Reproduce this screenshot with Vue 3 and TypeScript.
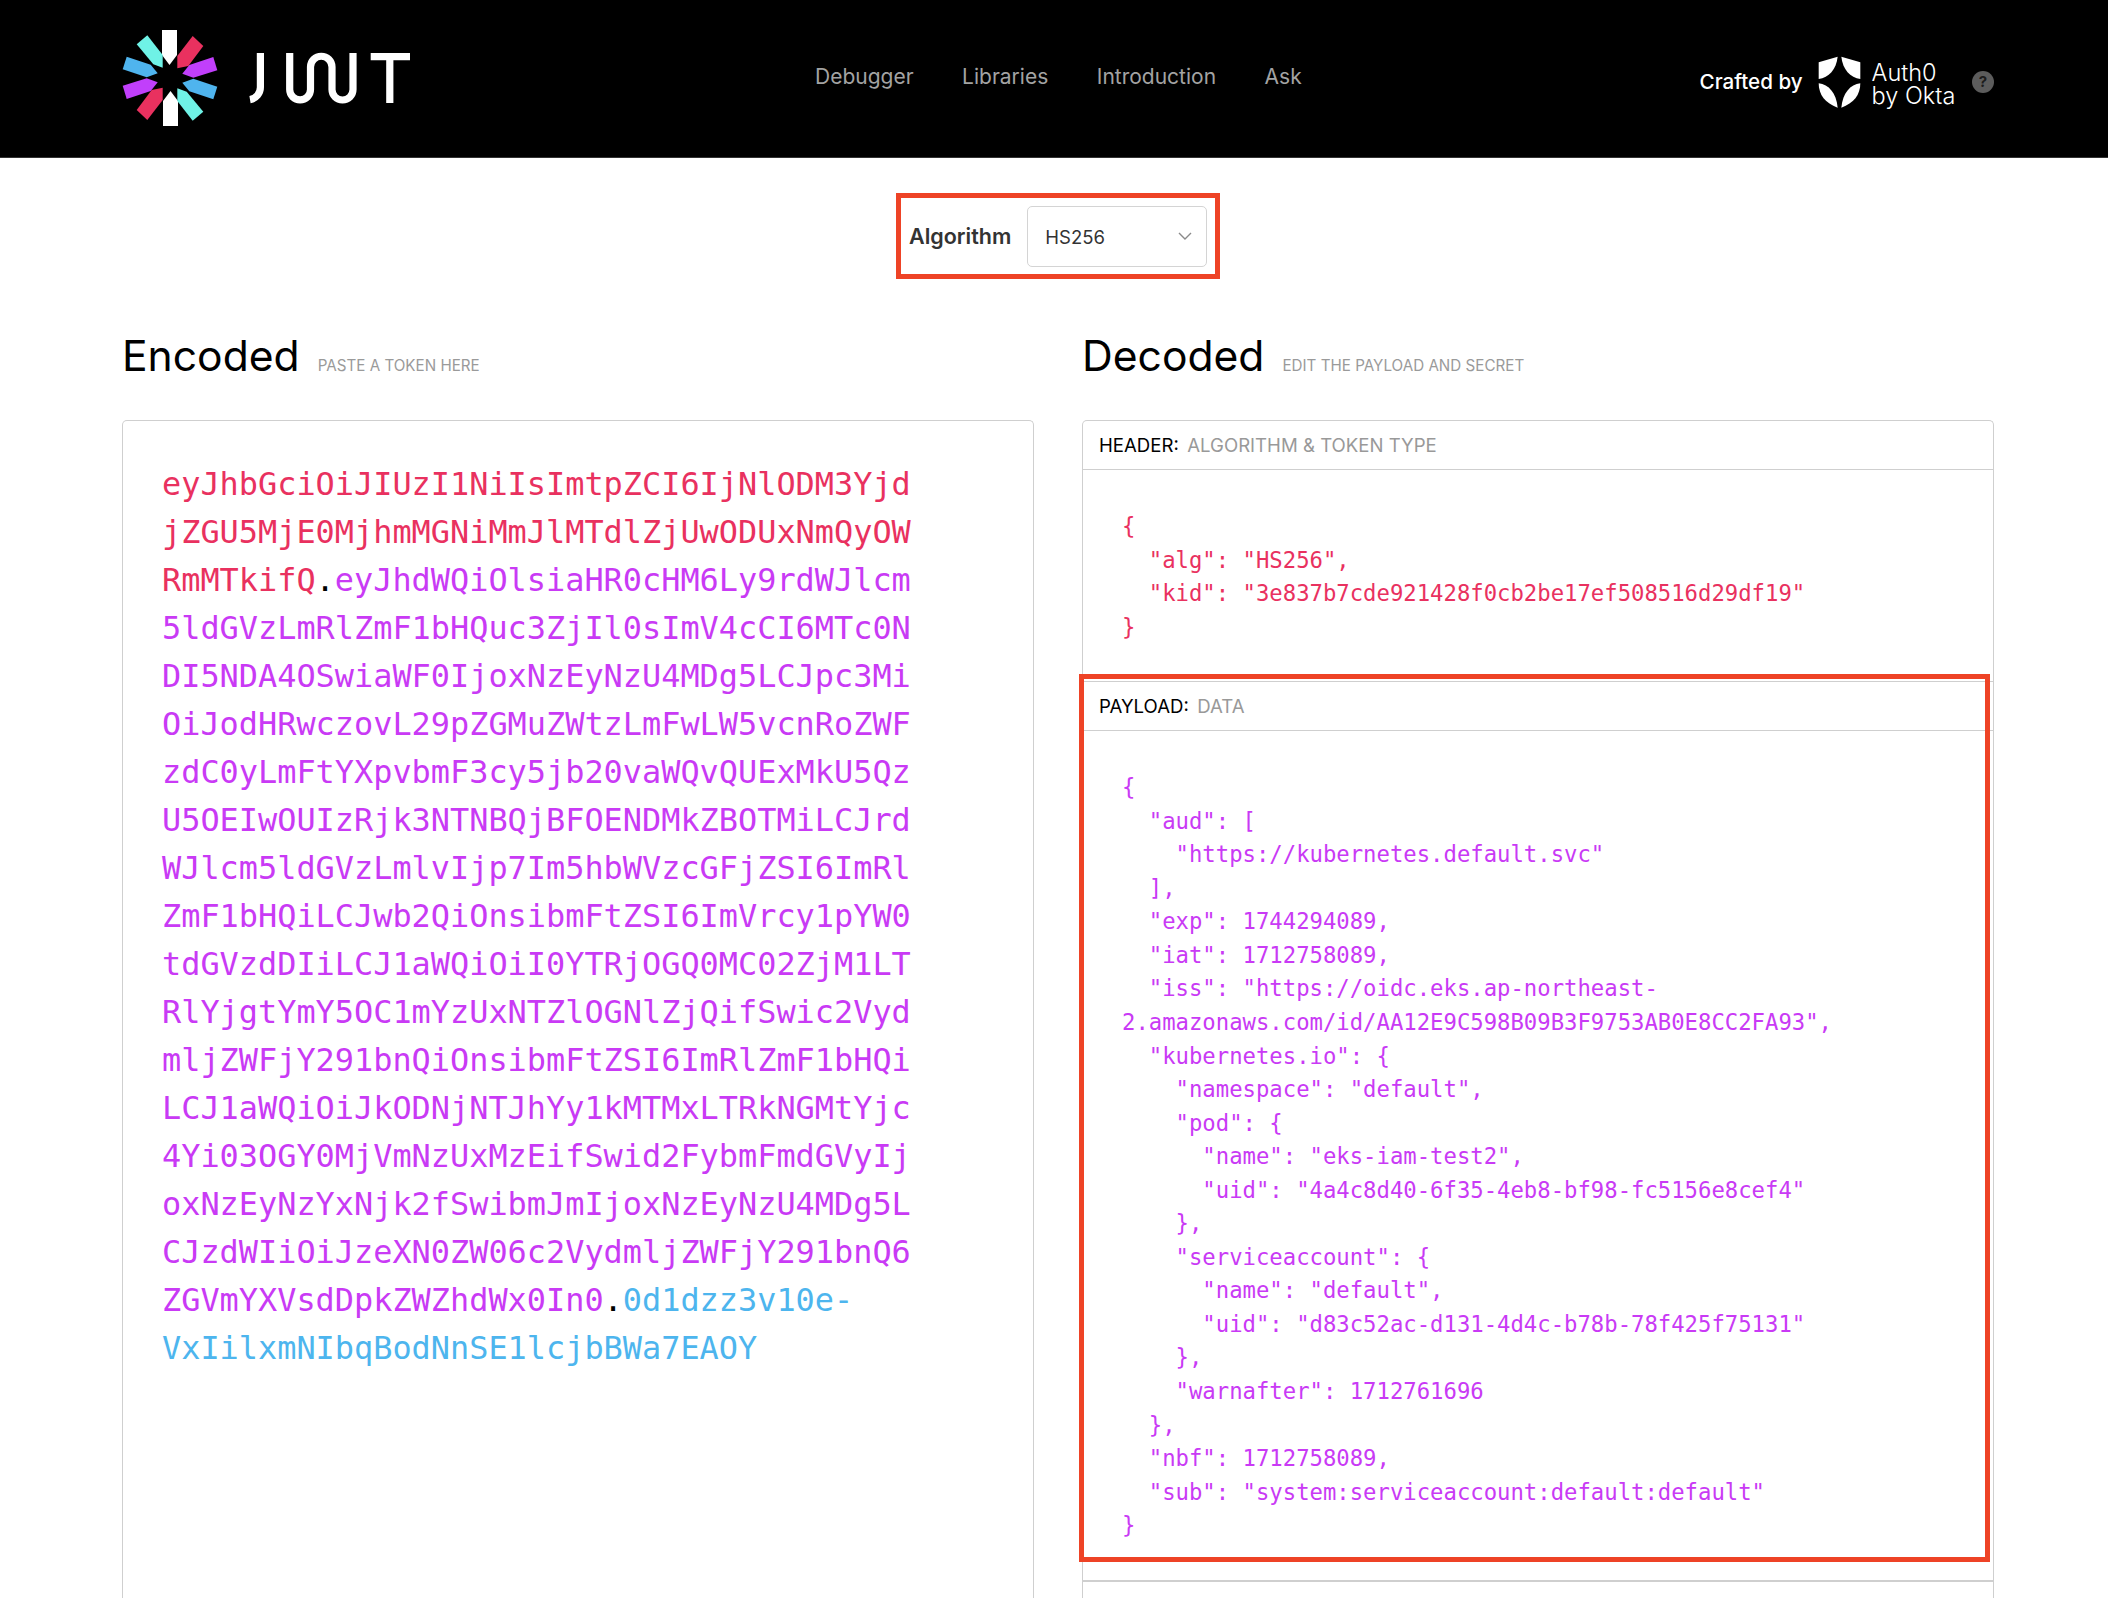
<script setup lang="ts">
const navItems: string[] = ['Debugger', 'Libraries', 'Introduction', 'Ask']

const tokenHeader = 'eyJhbGciOiJIUzI1NiIsImtpZCI6IjNlODM3YjdjZGU5MjE0MjhmMGNiMmJlMTdlZjUwODUxNmQyOWRmMTkifQ'
const tokenPayload = 'eyJhdWQiOlsiaHR0cHM6Ly9rdWJlcm5ldGVzLmRlZmF1bHQuc3ZjIl0sImV4cCI6MTc0NDI5NDA4OSwiaWF0IjoxNzEyNzU4MDg5LCJpc3MiOiJodHRwczovL29pZGMuZWtzLmFwLW5vcnRoZWFzdC0yLmFtYXpvbmF3cy5jb20vaWQvQUExMkU5QzU5OEIwOUIzRjk3NTNBQjBFOENDMkZBOTMiLCJrdWJlcm5ldGVzLmlvIjp7Im5hbWVzcGFjZSI6ImRlZmF1bHQiLCJwb2QiOnsibmFtZSI6ImVrcy1pYW0tdGVzdDIiLCJ1aWQiOiI0YTRjOGQ0MC02ZjM1LTRlYjgtYmY5OC1mYzUxNTZlOGNlZjQifSwic2VydmljZWFjY291bnQiOnsibmFtZSI6ImRlZmF1bHQiLCJ1aWQiOiJkODNjNTJhYy1kMTMxLTRkNGMtYjc4Yi03OGY0MjVmNzUxMzEifSwid2FybmFmdGVyIjoxNzEyNzYxNjk2fSwibmJmIjoxNzEyNzU4MDg5LCJzdWIiOiJzeXN0ZW06c2VydmljZWFjY291bnQ6ZGVmYXVsdDpkZWZhdWx0In0'
const tokenSig = '0d1dzz3v10e-VxIilxmNIbqBodNnSE1lcjbBWa7EAOY'

const headerJson = `{
  "alg": "HS256",
  "kid": "3e837b7cde921428f0cb2be17ef508516d29df19"
}`

const payloadJson = `{
  "aud": [
    "https://kubernetes.default.svc"
  ],
  "exp": 1744294089,
  "iat": 1712758089,
  "iss": "https://oidc.eks.ap-northeast-
2.amazonaws.com/id/AA12E9C598B09B3F9753AB0E8CC2FA93",
  "kubernetes.io": {
    "namespace": "default",
    "pod": {
      "name": "eks-iam-test2",
      "uid": "4a4c8d40-6f35-4eb8-bf98-fc5156e8cef4"
    },
    "serviceaccount": {
      "name": "default",
      "uid": "d83c52ac-d131-4d4c-b78b-78f425f75131"
    },
    "warnafter": 1712761696
  },
  "nbf": 1712758089,
  "sub": "system:serviceaccount:default:default"
}`
</script>

<template>
  <div class="page">
    <header class="topbar">
      <svg class="logo" viewBox="120 28 292 100" width="292" height="100" role="img" aria-label="JWT">
        <g>
          <path fill="#fff" d="M162 30h15v25l-7.5 10-7.5-10z" />
          <path fill="#6ff2e6" d="M136.7 44.3 147.3 35.3 162.7 55v12.7l-9.4-3.4z" />
          <path fill="#4fb4ee" d="M122.7 69.3 126.7 56.7 150.7 64.7 157.7 73.3 146.7 77.3z" />
          <path fill="#c13ffb" d="M122.7 85.7 146.7 78.3 157.7 82.3 150.7 91 126.7 99z" />
          <path fill="#e9315f" d="M136.7 110 151.7 90 162.7 87.7V100L147.3 120z" />
        </g>
        <g transform="rotate(180 170 78)">
          <path fill="#fff" d="M162 30h15v25l-7.5 10-7.5-10z" />
          <path fill="#6ff2e6" d="M136.7 44.3 147.3 35.3 162.7 55v12.7l-9.4-3.4z" />
          <path fill="#4fb4ee" d="M122.7 69.3 126.7 56.7 150.7 64.7 157.7 73.3 146.7 77.3z" />
          <path fill="#c13ffb" d="M122.7 85.7 146.7 78.3 157.7 82.3 150.7 91 126.7 99z" />
          <path fill="#e9315f" d="M136.7 110 151.7 90 162.7 87.7V100L147.3 120z" />
        </g>
        <g fill="none" stroke="#fff" stroke-width="7.2">
          <path d="M260.4 53V87a12.5 12.5 0 0 1-10.4 12.6" />
          <path d="M289.7 53V89.5a10.4 10.4 0 0 0 20.8 0V67a10.75 10.75 0 0 1 21.5 0V89.5a10.5 10.5 0 0 0 21 0V53" />
          <path d="M370.7 56.6H410M389.8 56.6V103" />
        </g>
      </svg>

      <nav class="nav">
        <a v-for="item in navItems" :key="item" class="nav-link">{{ item }}</a>
      </nav>

      <div class="crafted">
        <span class="crafted-label">Crafted by</span>
        <svg class="shield" viewBox="410 75 135 163" width="45" height="54.3" aria-hidden="true">
          <path fill="#fff" d="M472 80 415 97V147C445 143 468 118 472 80Z" />
          <path fill="#fff" d="M483 80 540 97V147C510 143 487 118 483 80Z" />
          <path fill="#fff" d="M415 160C445 163 468 190 472 233 435 220 415 195 415 160Z" />
          <path fill="#fff" d="M540 160C510 163 487 190 483 233 520 220 540 195 540 160Z" />
        </svg>
        <span class="brand">Auth0<br />by Okta</span>
        <span class="help">?</span>
      </div>
    </header>

    <div class="algo-wrap">
      <div class="algo">
        <span class="algo-label">Algorithm</span>
        <div class="select">
          <span class="select-value">HS256</span>
          <svg width="14" height="8" viewBox="0 0 14 8" aria-hidden="true">
            <path d="M1 1l6 6 6-6" fill="none" stroke="#8a8a8a" stroke-width="1.4" />
          </svg>
        </div>
      </div>
    </div>

    <main class="columns">
      <section class="column">
        <div class="heading">
          <h2>Encoded</h2>
          <span class="hint">PASTE A TOKEN HERE</span>
        </div>
        <div class="panel encoded">
          <p class="token"><span class="red">{{ tokenHeader }}</span><span class="dot">.</span><span class="purple">{{ tokenPayload }}</span><span class="dot">.</span><span class="blue">{{ tokenSig }}</span></p>
        </div>
      </section>

      <section class="column">
        <div class="heading">
          <h2>Decoded</h2>
          <span class="hint">EDIT THE PAYLOAD AND SECRET</span>
        </div>
        <div class="panel decoded">
          <div class="part">
            <div class="part-title">HEADER:<span class="part-sub">ALGORITHM &amp; TOKEN TYPE</span></div>
            <pre class="code red">{{ headerJson }}</pre>
          </div>
          <div class="part payload">
            <div class="part-title">PAYLOAD:<span class="part-sub">DATA</span></div>
            <pre class="code purple">{{ payloadJson }}</pre>
            <div class="highlight"></div>
          </div>
          <div class="part rest"></div>
        </div>
      </section>
    </main>
  </div>
</template>

<style>
html, body { margin: 0; height: 100%; overflow: hidden; background: #fff; }
</style>

<style scoped>
.page {
  height: 1598px;
  overflow: hidden;
  font-family: Inter, "Liberation Sans", sans-serif;
  color: #000;
}
.topbar {
  height: 158px;
  box-sizing: border-box;
  padding: 28px 114px 0 120px;
  display: flex;
  align-items: flex-start;
  background: #000;
  border-bottom: 1px solid #333;
}
.logo { flex: none; }
.nav {
  display: flex;
  gap: 48.5px;
  margin-left: 403px;
  padding-top: 36px;
}
.nav-link {
  font-size: 21px;
  line-height: 26px;
  color: #a3a3a3;
}
.crafted {
  margin-left: auto;
  display: flex;
  align-items: center;
  height: 54px;
  margin-top: 27px;
  color: #fff;
}
.crafted-label { font-size: 20.6px; font-weight: 500; margin: 0 15px 2px 0; }
.brand { font-size: 23.5px; line-height: 23px; font-weight: 300; margin: 3px 0 0 10px; width: 100.4px; }
.shield { flex: none; margin-left: -1px; }
.help {
  width: 22px;
  height: 22px;
  border-radius: 50%;
  background: #5c5c5c;
  color: #1c1c1c;
  font-size: 15px;
  font-weight: 700;
  text-align: center;
  line-height: 22px;
}
.algo-wrap {
  display: flex;
  justify-content: center;
  padding: 35px 0 0 8px;
}
.algo {
  display: flex;
  align-items: center;
  gap: 16px;
  box-sizing: border-box;
  width: 324px;
  height: 86px;
  padding: 0 8px;
  border: 5px solid #ee4326;
}
.algo-label { font-size: 21.5px; font-weight: 600; color: #333; }
.select {
  flex: 1;
  height: 61px;
  box-sizing: border-box;
  border: 1px solid #d4d4d4;
  border-radius: 5px;
  padding: 0 14px 0 17px;
  display: flex;
  align-items: center;
  justify-content: space-between;
  font-size: 18.5px;
  color: #333;
}
.select-value { padding-top: 2px; }
.columns {
  display: grid;
  grid-template-columns: 912px 912px;
  gap: 48px;
  padding: 0 114px 0 122px;
}
.heading {
  display: flex;
  align-items: baseline;
  gap: 18px;
  height: 141px;
  box-sizing: border-box;
  padding-top: 49px;
}
.heading h2 {
  margin: 0;
  font-size: 42.6px;
  line-height: 56px;
  font-weight: 400;
}
.hint { font-size: 15.2px; color: #9a9a9a; }
.panel {
  border: 1px solid #cfcfcf;
  border-bottom: 0;
  border-radius: 5px 5px 0 0;
  height: 1300px;
  box-sizing: border-box;
}
.encoded { padding: 39px 39px; }
.token {
  margin: 0;
  width: 39.5ch;
  font-family: "DejaVu Sans Mono", monospace;
  font-size: 31.9px;
  line-height: 48px;
  overflow-wrap: anywhere;
}
.dot { color: #000; }
.red { color: #e9315f; }
.purple { color: #c93af5; }
.blue { color: #4db5ee; }
.part { border-bottom: 1px solid #cfcfcf; }
.part-title {
  height: 49px;
  box-sizing: border-box;
  padding: 0 16px;
  display: flex;
  align-items: center;
  font-size: 18.6px;
  border-bottom: 1px solid #cfcfcf;
}
.part-sub { color: #999; margin-left: 8.5px; }
.code {
  margin: 0;
  padding: 40px 39px 37px;
  font-family: "DejaVu Sans Mono", monospace;
  font-size: 22.25px;
  line-height: 33.55px;
}
.payload { position: relative; }
.highlight {
  position: absolute;
  left: -4px;
  right: 3px;
  top: -8px;
  bottom: 18px;
  border: 5px solid #ee4326;
  pointer-events: none;
}
</style>
